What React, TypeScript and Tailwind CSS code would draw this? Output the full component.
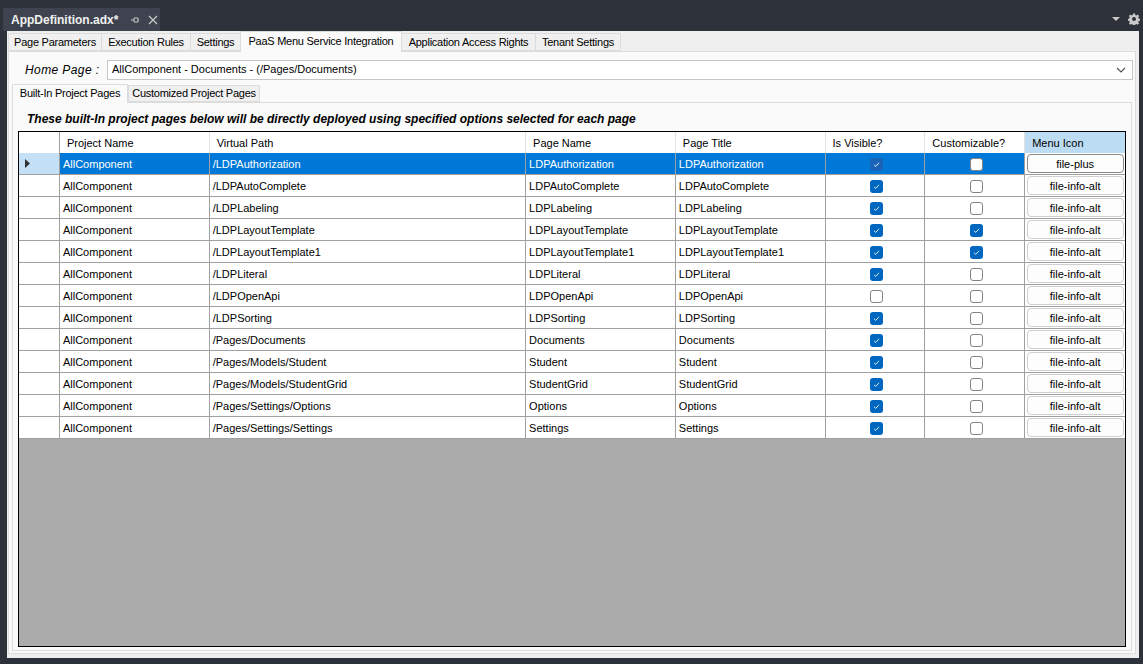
import React from "react";

const rows: [string, string, boolean, boolean, string][] = [
  ["/LDPAuthorization", "LDPAuthorization", true, false, "file-plus"],
  ["/LDPAutoComplete", "LDPAutoComplete", true, false, "file-info-alt"],
  ["/LDPLabeling", "LDPLabeling", true, false, "file-info-alt"],
  ["/LDPLayoutTemplate", "LDPLayoutTemplate", true, true, "file-info-alt"],
  ["/LDPLayoutTemplate1", "LDPLayoutTemplate1", true, true, "file-info-alt"],
  ["/LDPLiteral", "LDPLiteral", true, false, "file-info-alt"],
  ["/LDPOpenApi", "LDPOpenApi", false, false, "file-info-alt"],
  ["/LDPSorting", "LDPSorting", true, false, "file-info-alt"],
  ["/Pages/Documents", "Documents", true, false, "file-info-alt"],
  ["/Pages/Models/Student", "Student", true, false, "file-info-alt"],
  ["/Pages/Models/StudentGrid", "StudentGrid", true, false, "file-info-alt"],
  ["/Pages/Settings/Options", "Options", true, false, "file-info-alt"],
  ["/Pages/Settings/Settings", "Settings", true, false, "file-info-alt"],
];

function Check({ on, sel }: { on: boolean; sel?: boolean }) {
  if (on)
    return (
      <div className={`w-[13px] h-[13px] rounded-[3px] flex items-center justify-center ${sel ? "bg-[#1a63b8]" : "bg-[#0067c0]"}`}>
        <svg width="9" height="9" viewBox="0 0 9 9">
          <path d="M2 4.8 L3.8 6.4 L7 2.8" stroke="#ffffff" strokeWidth="1" fill="none" opacity="0.85" />
        </svg>
      </div>
    );
  return <div className="w-[13px] h-[13px] rounded-[3px] bg-white border border-[#858585]" />;
}

const tabs: [string, string][] = [
  ["Page Parameters", "w-[94px]"],
  ["Execution Rules", "w-[90px]"],
  ["Settings", "w-[51px]"],
  ["PaaS Menu Service Integration", "w-[162px]"],
  ["Application Access Rights", "w-[135px]"],
  ["Tenant Settings", "w-[86px]"],
];

export default function App() {
  return (
    <div className="w-[1143px] h-[664px] bg-[#2d3139] flex flex-col overflow-hidden text-[11px] text-black" style={{ fontFamily: '"Liberation Sans", Arial, sans-serif' }}>
      {/* title bar */}
      <div className="h-[31px] flex items-end justify-between shrink-0">
        <div className="ml-[3px] h-[23px] w-[157px] bg-[#3f4350] flex items-center pl-[8px] gap-[8px]">
          <span className="text-[#f1f1f1] font-bold text-[12px]">AppDefinition.adx*</span>
          <svg width="10" height="10" viewBox="0 0 10 10" className="ml-[4px]">
            <path d="M1 5 H4 M4 3 V7 M4 3 H8 V7 H4 M8 5 H9" stroke="#c8c8c8" strokeWidth="1" fill="none" />
          </svg>
          <svg width="10" height="10" viewBox="0 0 10 10">
            <path d="M1 1 L9 9 M9 1 L1 9" stroke="#c8c8c8" strokeWidth="1.3" />
          </svg>
        </div>
        <div className="flex items-center gap-[8px] mr-[3px] mb-[6px]">
          <svg width="8" height="5" viewBox="0 0 8 5"><path d="M0 0 H8 L4 4 Z" fill="#c8c8c8" /></svg>
          <svg width="12" height="12" viewBox="0 0 24 24" fill="#c8c8c8">
            <path d="M10 1h4l.6 3 2.2.9 2.6-1.7 2.8 2.8-1.7 2.6.9 2.2 3 .6v4l-3 .6-.9 2.2 1.7 2.6-2.8 2.8-2.6-1.7-2.2.9-.6 3h-4l-.6-3-2.2-.9-2.6 1.7-2.8-2.8 1.7-2.6-.9-2.2-3-.6v-4l3-.6.9-2.2-1.7-2.6 2.8-2.8 2.6 1.7 2.2-.9z M12 8a4 4 0 1 0 0 8a4 4 0 1 0 0-8z" fillRule="evenodd" />
          </svg>
        </div>
      </div>
      {/* main */}
      <div className="ml-[7px] mr-[4px] h-[627px] bg-[#efefef] flex flex-col shrink-0">
        <div className="flex items-end h-[20px] pl-[1px] tracking-[-0.25px]">
          {tabs.map(([t, w], i) =>
            i === 3 ? (
              <div key={t} className={`${w} h-[21px] bg-[#fafafa] border border-b-0 border-[#dcdcdc] flex items-center justify-center pb-[2px] -mb-[1px] -ml-[1px] z-10`}>{t}</div>
            ) : (
              <div key={t} className={`${w} h-[18px] bg-[#f0f0f0] border border-[#dcdcdc] flex items-center justify-center pt-[1px] ${i === 0 ? "" : "-ml-[1px]"}`}>{t}</div>
            )
          )}
        </div>
        <div className="mx-[1px] mr-[3px] flex-1 mb-[4px] bg-[#fafafa] border border-[#dcdcdc] flex flex-col">
          <div className="h-[27px] flex items-center mt-[4px]">
            <span className="italic text-[12px] ml-[16px] w-[82px] tracking-[0.4px]">Home Page :</span>
            <div className="flex-1 mr-[2px] h-[20px] bg-white border border-[#c6c6c6] flex items-center justify-between pl-[4px] pr-[6px]">
              <span>AllComponent - Documents - (/Pages/Documents)</span>
              <svg width="10" height="6" viewBox="0 0 10 6"><path d="M1 1 L5 5 L9 1" stroke="#505050" strokeWidth="1.1" fill="none" /></svg>
            </div>
          </div>
          <div className="flex items-end h-[19px] ml-[3px] tracking-[-0.25px]">
            <div className="w-[116px] h-[19px] bg-[#fafafa] border border-b-0 border-[#dcdcdc] flex items-center justify-center pb-[1px] z-10 -mb-[1px]">Built-In Project Pages</div>
            <div className="w-[132px] h-[17px] bg-[#f0f0f0] border border-[#dcdcdc] flex items-center justify-center">Customized Project Pages</div>
          </div>
          <div className="mx-[3px] mb-[2px] flex-1 border border-[#dcdcdc] flex flex-col px-[5px] pb-[3px]">
            <div className="h-[28px] flex items-center pl-[9px] pt-[4px] font-bold italic text-[12px]">These built-In project pages below will be directly deployed using specified options selected for each page</div>
            <div className="flex-1 border border-black bg-[#ababab] flex flex-col">
              {/* header */}
              <div className="flex h-[21px] bg-white">
                <div className="w-[41px] border-r border-[#a0a0a0]" />
                {[
                  ["Project Name", "w-[150px]"],
                  ["Virtual Path", "w-[317px]"],
                  ["Page Name", "w-[150px]"],
                  ["Page Title", "w-[150px]"],
                  ["Is Visible?", "w-[100px]"],
                  ["Customizable?", "w-[100px]"],
                ].map(([h, w]) => (
                  <div key={h} className={`${w} border-r border-[#e2e2e2] flex items-center pl-[7px] pt-[1px]`}>{h}</div>
                ))}
                <div className="w-[100px] bg-[#bcdcf4] flex items-center pl-[7px] pt-[1px]">Menu Icon</div>
              </div>
              {rows.map((r, i) => {
                const sel = i === 0;
                const cell = `border-r border-b border-[#a0a0a0] flex items-center pl-[3px] pt-[1px] ${sel ? "bg-[#0078d7] text-white" : "bg-white"}`;
                return (
                  <div key={i} className="flex h-[22px]">
                    <div className={`w-[41px] border-r border-b border-[#a0a0a0] flex items-center pl-[6px] ${sel ? "bg-[#c4e0f7]" : "bg-white"}`}>
                      {sel && <svg width="6" height="9" viewBox="0 0 6 9"><path d="M0 0 L5 4.5 L0 9 Z" fill="#303030" /></svg>}
                    </div>
                    <div className={`w-[150px] ${cell}`}>AllComponent</div>
                    <div className={`w-[317px] ${cell}`}>{r[0]}</div>
                    <div className={`w-[150px] ${cell}`}>{r[1]}</div>
                    <div className={`w-[150px] ${cell}`}>{r[1]}</div>
                    <div className={`w-[100px] ${cell} justify-center pl-0 pt-0`}><Check on={r[2]} sel={sel} /></div>
                    <div className={`w-[100px] ${cell} justify-center pl-0 pt-0`}><Check on={r[3]} sel={sel} /></div>
                    <div className={`w-[100px] border-b border-[#a0a0a0] bg-white flex items-center justify-center`}>
                      <div className={`w-[97px] h-[19px] rounded-[4px] border flex items-center justify-center pt-[1px] bg-[#fdfdfd] ${sel ? "border-[#8a8a8a]" : "border-[#d0d0d0]"}`}>{r[4]}</div>
                    </div>
                  </div>
                );
              })}
            </div>
          </div>
        </div>
      </div>
    </div>
  );
}
